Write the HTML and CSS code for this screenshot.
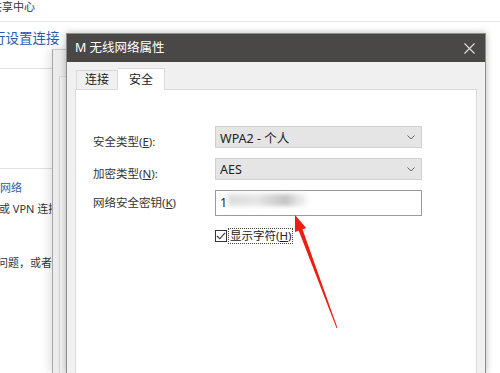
FILE: index.html
```html
<!DOCTYPE html>
<html lang="zh-CN">
<head>
<meta charset="utf-8">
<link rel="stylesheet" href="styles.css">
</head>
<body>
<div class="page">
  <div class="topbar"><span class="crumb">共享中心</span></div>
  <div class="side">
    <div class="heading">行设置连接</div>
    <div class="sect">
      <div class="link">网络</div>
      <div class="desc">或 VPN 连接</div>
      <div class="desc2">问题，或者</div>
    </div>
  </div>
</div>

<div class="win win-a"></div>
<div class="win win-b"></div>

<div class="dialog">
  <div class="titlebar">
    <span class="title">M 无线网络属性</span>
    <svg class="close" width="11" height="11" viewBox="0 0 11 11"><path d="M0.5 0.5 L10.5 10.5 M10.5 0.5 L0.5 10.5" stroke="#e0e0e0" stroke-width="1.1" fill="none"/></svg>
  </div>
  <div class="body">
    <div class="tabs">
      <div class="tab">连接</div>
      <div class="tab tab-on">安全</div>
    </div>
    <div class="panel">
      <div class="form">
        <div class="label">安全类型(<u>E</u>):</div>
        <div class="select"><span>WPA2 - 个人</span><svg width="8" height="5" viewBox="0 0 8 5"><path d="M0.5 0.5 L4 4 L7.5 0.5" stroke="#666" fill="none"/></svg></div>
        <div class="label">加密类型(<u>N</u>):</div>
        <div class="select"><span>AES</span><svg width="8" height="5" viewBox="0 0 8 5"><path d="M0.5 0.5 L4 4 L7.5 0.5" stroke="#666" fill="none"/></svg></div>
        <div class="label">网络安全密钥(<u>K</u>)</div>
        <div class="input"><span class="digit">1</span><span class="blur"></span></div>
        <div class="check-row">
          <span class="box"><svg width="12" height="12" viewBox="0 0 12 12"><path d="M2 6 L4.8 8.8 L10 2.8" stroke="#333" stroke-width="1.1" fill="none"/></svg></span>
          <span class="check-label">显示字符(<u>H</u>)</span>
        </div>
      </div>
    </div>
  </div>
</div>

<svg class="arrow" width="500" height="373" viewBox="0 0 500 373">
  <polygon points="295,215 306.2,227.9 302.5,229.3 337.4,327.8 336.6,328.2 298.7,230.7 295,232.1" fill="#ee1d10"/>
</svg>
</body>
</html>
```

FILE: styles.css
```css
html, body {
  margin: 0;
  padding: 0;
  width: 500px;
  height: 373px;
  overflow: hidden;
  background: #fff;
  font-family: "Noto Sans", "Noto Sans CJK SC", sans-serif;
  color: #333;
}

.page {
  width: 500px;
}

.topbar {
  height: 21px;
  border-bottom: 1px solid #e4e4e4;
  font-size: 11px;
  line-height: 14px;
  white-space: nowrap;
  overflow: hidden;
}

.crumb {
  display: block;
  text-indent: -9px;
  color: #333;
}

.side {
  width: 53px;
  white-space: nowrap;
}

.heading {
  margin-top: 7px;
  height: 18px;
  line-height: 18px;
  padding-bottom: 21px;
  font-size: 13.5px;
  color: #2a5cae;
  text-indent: -8px;
  border-bottom: 1px solid #e0e0e0;
  overflow: hidden;
  width: 64px;
}

.sect {
  margin-top: 99px;
  border-top: 1px solid #e0e0e0;
  font-size: 11px;
  line-height: 16px;
}

.link {
  margin-top: 11px;
  color: #2a5cae;
}

.desc {
  margin-top: 5px;
  text-indent: -1px;
}

.desc2 {
  margin-top: 38px;
  text-indent: -3px;
}

.win {
  position: absolute;
  width: 420px;
}

.win-a {
  left: 52px;
  top: 49px;
  height: 323px;
  background: #ececec;
  border-left: 1px solid #a8a8a8;
  border-top: 1px solid #c8c8c8;
  box-shadow: -3px 0 9px rgba(0, 0, 0, 0.12);
}

.win-b {
  left: 59px;
  top: 76px;
  height: 296px;
  background: #f1f1f1;
  border-left: 1px solid #d2d2d2;
  border-top: 1px solid #dcdcdc;
}

.dialog {
  position: absolute;
  left: 66px;
  top: 33px;
  width: 418px;
  height: 340px;
  border: 1px solid #8d8d8d;
  border-bottom: none;
  background: #f0f0f0;
  box-shadow: 0 0 7px rgba(0, 0, 0, 0.28);
  overflow: hidden;
}

.titlebar {
  height: 28px;
  background: #4a4846;
  display: flex;
  align-items: center;
  justify-content: space-between;
  padding: 0 10px 0 8px;
}

.title {
  color: #fff;
  font-size: 12.5px;
  line-height: 16px;
}

.close {
  display: block;
  margin-top: 1px;
}

.body {
  padding: 6px 8px 0 8px;
}

.tabs {
  display: flex;
  align-items: flex-end;
  height: 21px;
  padding-left: 1px;
  position: relative;
  z-index: 1;
}

.tab {
  width: 40px;
  height: 18px;
  border: 1px solid #d9d9d9;
  border-bottom: none;
  background: #f0f0f0;
  font-size: 12px;
  line-height: 18px;
  text-align: center;
  color: #222;
}

.tab-on {
  width: 46px;
  height: 21px;
  margin-bottom: -1px;
  background: #fff;
  line-height: 22px;
  border-left: none;
}

.panel {
  background: #fff;
  border: 1px solid #d9d9d9;
  border-bottom: none;
  height: 247px;
  padding: 36px 0 0 17px;
}

.form {
  display: grid;
  grid-template-columns: 122px 207px;
  align-items: center;
  font-size: 11.5px;
}

.label {
  line-height: 16px;
  color: #333;
}

.select {
  height: 20px;
  border: 1px solid #cfcfcf;
  background: #e5e5e5;
  display: flex;
  align-items: center;
  justify-content: space-between;
  padding: 0 6px 0 4px;
  margin-bottom: 10px;
  color: #222;
  font-size: 12.5px;
}

.input {
  height: 24px;
  border: 1px solid #9a9a9a;
  background: #fff;
  display: flex;
  align-items: center;
  padding-left: 4px;
  color: #222;
  font-size: 12.5px;
}

.digit {
  margin-top: -2px;
}

.blur {
  display: block;
  width: 80px;
  height: 12px;
  margin-left: 1px;
  margin-top: -6px;
  background: linear-gradient(90deg, #dcdcdc 0%, #e6e6e6 35%, #cfcfcf 60%, #c4c4c4 72%, #e6e6e6 88%, #f6f6f6 100%);
  filter: blur(2px);
}

.check-row {
  grid-column: 2;
  margin-top: 13px;
  display: flex;
  align-items: center;
}

.box {
  display: block;
  width: 12px;
  height: 12px;
  border: 1px solid #333;
  box-sizing: border-box;
}

.box svg {
  display: block;
  margin: -1px 0 0 -1px;
}

.check-label {
  margin-left: 2px;
  padding: 0 1px;
  line-height: 14px;
  outline: 1px dotted #444;
  color: #222;
}

.arrow {
  position: absolute;
  left: 0;
  top: 0;
  pointer-events: none;
}
```
